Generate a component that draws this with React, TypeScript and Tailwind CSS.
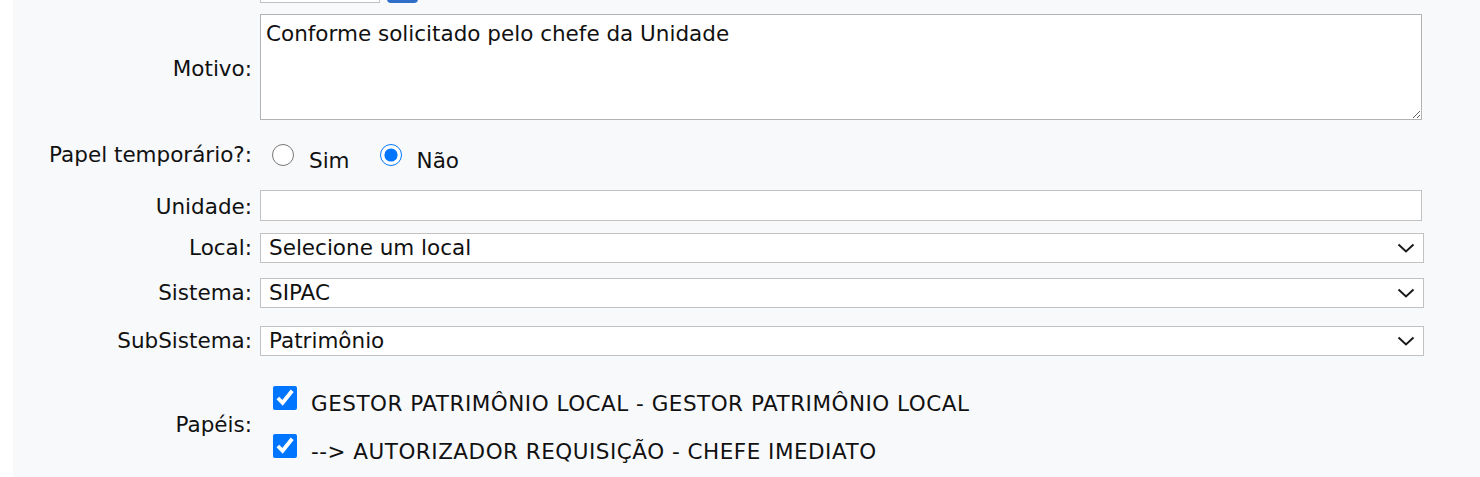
import React from 'react';

const font = { fontFamily: '"DejaVu Sans", Verdana, sans-serif' };

function Chevron() {
  return (
    <svg className="pointer-events-none absolute right-[9px] top-1/2 -translate-y-1/2" width="18" height="10" viewBox="0 0 18 10" fill="none">
      <path d="M1.5 1.5 L9 8.5 L16.5 1.5" stroke="#1a1a1a" strokeWidth="2" />
    </svg>
  );
}

function SelectBox({ value, className }: { value: string; className: string }) {
  return (
    <div className={`relative w-[1164px] ${className}`}>
      <select
        defaultValue={value}
        className="h-full w-full appearance-none border border-[#c2c2c2] bg-white pl-[8px] text-[21.5px] leading-[24px] text-[#111] outline-none"
      >
        <option>{value}</option>
      </select>
      <Chevron />
    </div>
  );
}

function Row({ label, className = '', labelClass = '', children }: { label: string; className?: string; labelClass?: string; children: React.ReactNode }) {
  return (
    <div className={`flex items-center gap-[8px] ${className}`}>
      <div className={`w-[239px] shrink-0 text-right leading-[24px] ${labelClass}`}>{label}</div>
      {children}
    </div>
  );
}

export default function App() {
  return (
    <div className="h-[477px] overflow-hidden bg-white" style={font}>
      <div className="ml-[13px] h-full bg-[#f8f9fb] text-[21.5px] leading-[24px] text-[#111]">
        {/* clipped row from above */}
        <div className="flex h-[3px] items-end gap-[8px] overflow-hidden">
          <div className="w-[239px] shrink-0" />
          <div className="h-[30px] w-[120px] border border-[#c2c2c2] bg-white" />
          <div className="ml-[-1px] h-[30px] w-[31px] rounded-[4px] bg-[#2f6fc9]" />
        </div>

        <Row label="Motivo:" className="mt-[11px]" labelClass="mt-[3px]">
          <textarea
            defaultValue="Conforme solicitado pelo chefe da Unidade"
            className="h-[106px] w-[1162px] border border-[#b3b3b3] bg-white px-[5px] pt-[6px] text-[21.5px] leading-[1.2] text-[#111] outline-none"
          />
        </Row>

        <Row label="Papel temporário?:" className="mt-[20px] h-[30px]">
          <div className="flex items-center">
            <input type="radio" name="temp" className="ml-[12px] h-[22px] w-[22px]" />
            <span className="ml-[15px] mt-[11px]">Sim</span>
            <input type="radio" name="temp" defaultChecked className="ml-[30px] h-[22px] w-[22px]" />
            <span className="ml-[15px] mt-[11px]">Não</span>
          </div>
        </Row>

        <Row label="Unidade:" className="mt-[20px]" labelClass="mt-[2px]">
          <input type="text" className="h-[31px] w-[1162px] border border-[#c2c2c2] bg-white outline-none" />
        </Row>

        <Row label="Local:" className="mt-[12px]">
          <SelectBox value="Selecione um local" className="h-[30px]" />
        </Row>

        <Row label="Sistema:" className="mt-[15px]">
          <SelectBox value="SIPAC" className="h-[30px]" />
        </Row>

        <Row label="SubSistema:" className="mt-[18px]">
          <SelectBox value="Patrimônio" className="h-[30px]" />
        </Row>

        <Row label="Papéis:" className="mt-[18px]" labelClass="mt-[6px]">
          <div className="flex flex-col">
            <label className="flex h-[48px] items-center">
              <input type="checkbox" defaultChecked className="ml-[13px] h-[24px] w-[24px]" />
              <span className="ml-[14px] mt-[12px] tracking-[0.5px]">GESTOR PATRIMÔNIO LOCAL - GESTOR PATRIMÔNIO LOCAL</span>
            </label>
            <label className="flex h-[48px] items-center">
              <input type="checkbox" defaultChecked className="ml-[13px] h-[24px] w-[24px]" />
              <span className="ml-[14px] mt-[12px] tracking-[0.5px]">--&gt; AUTORIZADOR REQUISIÇÃO - CHEFE IMEDIATO</span>
            </label>
          </div>
        </Row>
      </div>
    </div>
  );
}
